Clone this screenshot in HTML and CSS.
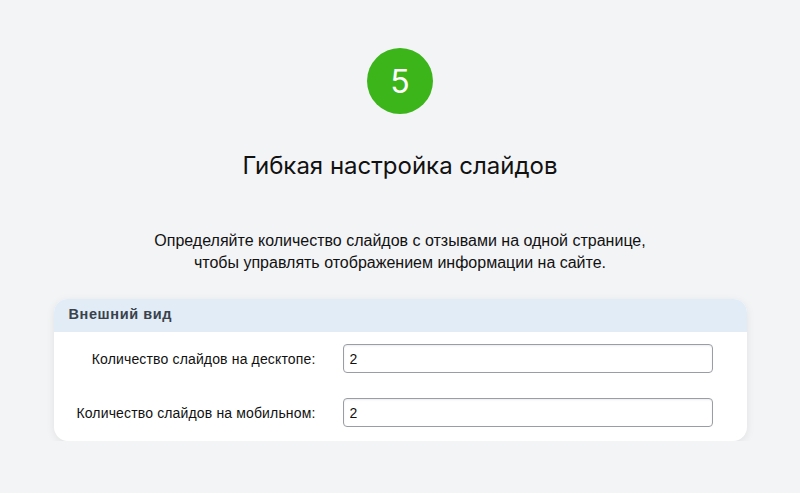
FILE: index.html
```html
<!DOCTYPE html>
<html lang="ru">
<head>
    <meta charset="UTF-8">
    <title>Гибкая настройка слайдов</title>
    <link rel="stylesheet" href="styles.css">
</head>
<body>
    <div class="page">
        <div class="step">5</div>
        <div class="title">Гибкая настройка слайдов</div>
        <div class="desc">
            Определяйте количество слайдов с отзывами на одной странице,<br>
            чтобы управлять отображением информации на сайте.
        </div>
        <div class="card">
            <div class="card-head">Внешний вид</div>
            <div class="card-body">
                <div class="row">
                    <label class="label" for="desktop">Количество слайдов на десктопе:</label>
                    <input type="text" id="desktop" class="field" value="2">
                </div>
                <div class="row">
                    <label class="label" for="mobile">Количество слайдов на мобильном:</label>
                    <input type="text" id="mobile" class="field" value="2">
                </div>
            </div>
        </div>
    </div>
</body>
</html>
```

FILE: styles.css
```css
body {
    margin: 0;
    padding: 0;
    background-color: #f3f4f6;
    font-family: "Liberation Sans", Arial, sans-serif;
    color: #111;
}

.page {
    display: flex;
    flex-direction: column;
    align-items: center;
    padding-top: 48px;
}

.step {
    width: 66px;
    height: 66px;
    border-radius: 50%;
    background-color: #3bb519;
    color: white;
    font-family: Inter, sans-serif;
    font-size: 32px;
    display: flex;
    justify-content: center;
    align-items: center;
}

.title {
    font-family: Inter, sans-serif;
    font-size: 24px;
    margin-top: 37px;
    line-height: 30px;
    color: #111;
}

.desc {
    margin-top: 49px;
    font-size: 16px;
    line-height: 22px;
    text-align: center;
}

.card {
    width: 693px;
    margin-top: 25px;
    background: white;
    border-radius: 14px;
    overflow: hidden;
    box-shadow: 0 2px 8px rgba(0, 0, 0, 0.08);
}

.card-head {
    background-color: #e1ecf7;
    height: 33px;
    line-height: 31px;
    padding-left: 15px;
    font-size: 14.5px;
    font-weight: bold;
    color: #3a424c;
    letter-spacing: 0.6px;
}

.card-body {
    padding: 12px 0 14px;
    display: flex;
    flex-direction: column;
    gap: 25px;
}

.row {
    display: flex;
    align-items: center;
}

.label {
    width: 262px;
    text-align: right;
    font-size: 14px;
    letter-spacing: 0.15px;
    color: #111;
}

.field {
    margin-left: 27px;
    width: 370px;
    height: 29px;
    box-sizing: border-box;
    border: 1px solid #9a9ea4;
    border-radius: 4px;
    padding: 0 6px;
    font-family: "Liberation Sans", Arial, sans-serif;
    font-size: 14px;
    color: #111;
    box-shadow: inset 0 1px 2px rgba(0, 0, 0, 0.08);
}
```
